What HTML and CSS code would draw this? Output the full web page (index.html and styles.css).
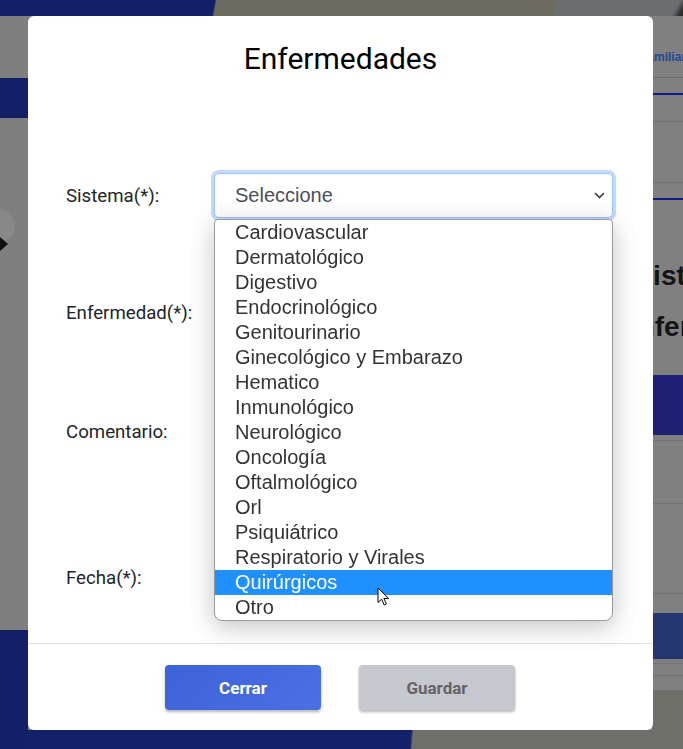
FILE: index.html
```html
<!DOCTYPE html>
<html lang="es">
<head>
  <meta charset="UTF-8" />
  <meta name="viewport" content="width=device-width, initial-scale=1.0"/>
  <title>Enfermedades</title>
  <link rel="stylesheet" href="styles.css">
</head>
<body>
  <!-- page behind the modal -->
  <div class="page">
    <div class="side side-left">
      <div class="band navy h16"></div>
      <div class="band gray h62"></div>
      <div class="band navy h40"></div>
      <div class="band gray h512">
        <svg class="carousel-arrow" width="28" height="50" viewBox="0 0 28 50">
          <circle cx="-2" cy="20" r="17" fill="#888"/>
          <polygon points="0,31 8,38 0,45" fill="#111"/>
        </svg>
      </div>
      <div class="band navy grow"></div>
    </div>

    <div class="middle">
      <div class="mid-top"></div>
      <div class="mid-fill"></div>
      <div class="mid-bottom"></div>
    </div>

    <div class="side side-right">
      <div class="r-top"></div>
      <div class="r-tab"><span>Familiar</span></div>
      <div class="r-row h15 navy-line"></div>
      <div class="r-row h26 line"></div>
      <div class="r-row h60 line"></div>
      <div class="r-row h15 navy-line"></div>
      <div class="r-title">
        <div class="t1">Lista</div>
        <div class="t2">Enfer</div>
      </div>
      <div class="r-navy"></div>
      <div class="r-row h5 line"></div>
      <div class="r-row h62 line"></div>
      <div class="r-row h89 line"></div>
      <div class="r-row h19"></div>
      <div class="r-navy2"></div>
      <div class="r-row h4 line"></div>
      <div class="r-row h11 line"></div>
      <div class="r-row h14"></div>
      <div class="r-bottom"></div>
    </div>
  </div>

  <div class="overlay">
    <div class="modal">
      <div class="modal-header">
        <h2>Enfermedades</h2>
      </div>

      <div class="modal-body">
        <form class="form">
          <label>Sistema(*):</label>
          <div class="control">
            <div class="select focused">
              <span>Seleccione</span>
              <svg width="11" height="7" viewBox="0 0 11 7"><polyline points="1,1 5.5,5.5 10,1" fill="none" stroke="#343a40" stroke-width="1.6"/></svg>
            </div>
            <ul class="options">
              <li>Cardiovascular</li>
              <li>Dermatológico</li>
              <li>Digestivo</li>
              <li>Endocrinológico</li>
              <li>Genitourinario</li>
              <li>Ginecológico y Embarazo</li>
              <li>Hematico</li>
              <li>Inmunológico</li>
              <li>Neurológico</li>
              <li>Oncología</li>
              <li>Oftalmológico</li>
              <li>Orl</li>
              <li>Psiquiátrico</li>
              <li>Respiratorio y Virales</li>
              <li class="active">Quirúrgicos</li>
              <li>Otro</li>
            </ul>
            <svg class="cursor" width="14" height="20" viewBox="0 0 14 20">
              <path d="M1 1 L1 15.5 L4.6 12.2 L7.2 18 L9.4 17 L6.9 11.4 L11.6 11.4 Z" fill="#fff" stroke="#000" stroke-width="1" stroke-linejoin="round"/>
            </svg>
          </div>

          <label>Enfermedad(*):</label>
          <div class="control">
            <div class="select"></div>
          </div>

          <label>Comentario:</label>
          <div class="control">
            <textarea class="input"></textarea>
          </div>

          <label>Fecha(*):</label>
          <div class="control">
            <input class="input" type="text">
          </div>
        </form>
      </div>

      <div class="modal-footer">
        <button class="btn btn-primary">Cerrar</button>
        <button class="btn btn-disabled">Guardar</button>
      </div>
    </div>
  </div>
</body>
</html>
```

FILE: styles.css
```css
body {
  margin: 0;
  height: 100vh;
  overflow: hidden;
  font-family: Roboto, "Liberation Sans", sans-serif;
  background-color: #7f7f7f;
}

/* background page */
.page {
  display: flex;
  height: 749px;
}

.side {
  display: flex;
  flex-direction: column;
  overflow: hidden;
}

.side-left {
  width: 28px;
}

.side-right {
  width: 30px;
  background-color: #808080;
}

.band.navy { background-color: #131f66; }
.band.gray { background-color: #7f7f7f; }
.h16 { height: 16px; }
.h62 { height: 62px; }
.h40 { height: 40px; }
.h512 { height: 512px; }
.grow { flex: 1; }

.carousel-arrow {
  display: block;
  margin-top: 88px;
}

.middle {
  flex: 1;
  display: flex;
  flex-direction: column;
}

.mid-top {
  height: 16px;
  background: linear-gradient(100deg, #131f66 0 184px, #6d6a5f 186px 520px, #6b6e71 520px);
}

.mid-fill {
  flex: 1;
  background-color: #7f7f7f;
}

.mid-bottom {
  height: 19px;
  background: linear-gradient(95deg, #13206a 0 382px, #6f6f69 384px);
}

.r-top {
  height: 16px;
  background: linear-gradient(120deg, #6b6e71 70%, #2b2d2a 90%);
}

.r-tab {
  height: 62px;
  border-bottom: 1px solid #6e6e6e;
  padding-top: 34px;
  box-sizing: border-box;
  font-family: "Liberation Sans", sans-serif;
  font-size: 12px;
  font-weight: bold;
  color: #1d4a99;
  white-space: nowrap;
}

.r-tab span {
  display: inline-block;
  margin-left: -13px;
}

.r-row { flex-shrink: 0; }
.r-row.line { border-bottom: 1px solid #727272; }
.r-row.navy-line { border-bottom: 2px solid #0d1b8c; }
.h15 { height: 15px; }
.h26 { height: 26px; }
.h60 { height: 60px; }
.h5 { height: 5px; }
.h89 { height: 89px; }
.h19 { height: 19px; }
.h4 { height: 4px; }
.h11 { height: 11px; }
.h14 { height: 14px; }

.r-title {
  padding: 50px 0 23px;
  font-family: "Liberation Sans", sans-serif;
  font-size: 28px;
  font-weight: bold;
  line-height: 51px;
  color: #141414;
  white-space: nowrap;
}

.r-title .t1 { margin-left: -17px; }
.r-title .t2 { margin-left: -34px; }

.r-navy {
  height: 60px;
  background-color: #1f1f73;
}

.r-navy2 {
  height: 46px;
  background-color: #243670;
}

.r-bottom {
  flex: 1;
  background-color: #6f6f69;
}

/* modal */
.overlay {
  position: fixed;
  top: 0;
  left: 0;
  right: 0;
  bottom: 0;
  padding: 16px 0 0 28px;
}

.modal {
  width: 625px;
  height: 714px;
  background: #fff;
  border-radius: 6px;
  display: flex;
  flex-direction: column;
  box-sizing: border-box;
}

.modal-header {
  padding-top: 23px;
  text-align: center;
}

.modal-header h2 {
  margin: 0;
  font-size: 30px;
  font-weight: 400;
  line-height: 40px;
  color: #000;
}

.modal-body {
  flex: 1;
  padding: 94px 40px 0 38px;
}

.form {
  display: grid;
  grid-template-columns: 148px 399px;
  grid-template-rows: 117px 119px 146px 45px;
}

.form label {
  height: 45px;
  display: flex;
  align-items: center;
  font-size: 14pt;
  color: #212529;
}

.control {
  position: relative;
}

.select,
.input {
  box-sizing: border-box;
  width: 399px;
  height: 45px;
  border: 1px solid #ced4da;
  border-radius: 5px;
  background: #fff;
  font-family: "Liberation Sans", sans-serif;
  font-size: 20px;
  color: #495057;
  margin: 0;
  display: block;
}

.select {
  display: flex;
  align-items: center;
  justify-content: space-between;
  padding: 0 7px 0 20px;
}

.select.focused {
  border-color: #9ec5fe;
  box-shadow: 0 0 0 3px #c3dafb;
}

.options {
  position: absolute;
  top: 46px;
  left: 0;
  width: 399px;
  box-sizing: border-box;
  margin: 0;
  padding: 0;
  list-style: none;
  background: #fff;
  border: 1px solid #9a9a9a;
  border-radius: 4px 4px 8px 8px;
  box-shadow: 0 6px 26px rgba(0, 0, 0, 0.24);
  z-index: 2;
  font-family: "Liberation Sans", sans-serif;
  font-size: 20px;
  color: #333;
}

.options li {
  height: 25px;
  line-height: 25px;
  padding-left: 20px;
}

.options li.active {
  background-color: #1e90ff;
  color: #fff;
}

.cursor {
  position: absolute;
  left: 163px;
  top: 414px;
  z-index: 3;
}

.modal-footer {
  border-top: 1px solid #dee2e6;
  padding: 21px 0 20px 137px;
  display: flex;
  gap: 38px;
}

.btn {
  width: 156px;
  height: 45px;
  border: none;
  border-radius: 4px;
  font-family: Roboto, sans-serif;
  font-size: 17px;
  font-weight: bold;
  box-shadow: 0 2px 3px rgba(0, 0, 0, 0.3);
}

.btn-primary {
  background: linear-gradient(135deg, #3e62d8, #4a70e4);
  color: #fff;
}

.btn-disabled {
  background: #c7c8cd;
  color: #646468;
}
```
